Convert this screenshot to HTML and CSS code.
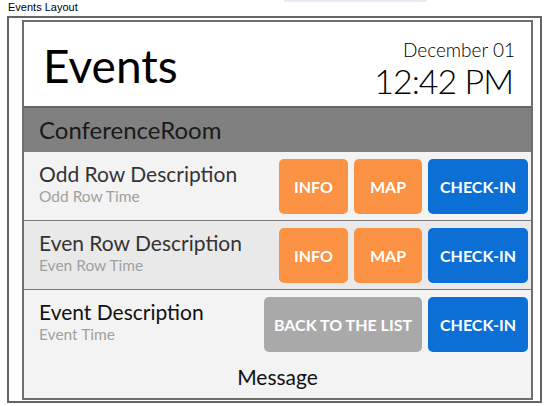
FILE: index.html
```html
<!DOCTYPE html>
<html>
<head>
<meta charset="utf-8">
<link rel="stylesheet" href="styles.css">
</head>
<body>
<div class="topline">
  <span class="caption">Events Layout</span>
  <span class="tabstrip"></span>
</div>
<div class="frame">
  <div class="panel">
    <div class="header">
      <div class="title">Events</div>
      <div class="clock">
        <div class="date">December 01</div>
        <div class="time">12:42 PM</div>
      </div>
    </div>
    <div class="room">ConferenceRoom</div>
    <div class="row odd">
      <div class="info">
        <div class="desc">Odd Row Description</div>
        <div class="when">Odd Row Time</div>
      </div>
      <div class="btns">
        <div class="btn orange w-info">INFO</div>
        <div class="btn orange w-map">MAP</div>
        <div class="btn blue w-check">CHECK-IN</div>
      </div>
    </div>
    <div class="row even">
      <div class="info">
        <div class="desc">Even Row Description</div>
        <div class="when">Even Row Time</div>
      </div>
      <div class="btns">
        <div class="btn orange w-info">INFO</div>
        <div class="btn orange w-map">MAP</div>
        <div class="btn blue w-check">CHECK-IN</div>
      </div>
    </div>
    <div class="row odd last">
      <div class="info">
        <div class="desc dark">Event Description</div>
        <div class="when">Event Time</div>
      </div>
      <div class="btns">
        <div class="btn grey w-back">BACK TO THE LIST</div>
        <div class="btn blue w-check">CHECK-IN</div>
      </div>
    </div>
    <div class="message">Message</div>
  </div>
</div>
</body>
</html>
```
FILE: styles.css
```css
html, body {
  margin: 0;
  padding: 0;
  background: #ffffff;
}
body {
  width: 544px;
  height: 406px;
  overflow: hidden;
  font-family: Lato, "Open Sans", sans-serif;
}
.topline {
  display: flex;
  align-items: flex-start;
  height: 16px;
}
.caption {
  font-family: "Liberation Sans", Arial, sans-serif;
  font-size: 11px;
  line-height: 13px;
  color: #000;
  margin-left: 8px;
  margin-top: 1px;
}
.tabstrip {
  width: 143px;
  height: 2px;
  background: #e6edf7;
  margin-left: 206px;
}
.frame {
  box-sizing: border-box;
  width: 535px;
  height: 387px;
  margin-left: 7px;
  border: 2px solid #646464;
  padding: 2px 7px 1px 13px;
}
.panel {
  box-sizing: border-box;
  width: 511px;
  height: 380px;
  border: 2px solid #6e6e6e;
  background: #f3f3f3;
  display: flex;
  flex-direction: column;
}
.header {
  height: 84px;
  background: #ffffff;
  display: flex;
  justify-content: space-between;
  align-items: flex-start;
  padding: 0 16px 0 19px;
}
.title {
  font-size: 46px;
  line-height: 46px;
  margin-top: 21px;
  color: #000;
}
.clock {
  text-align: right;
  color: #000;
  margin-top: 17px;
}
.date {
  font-size: 19px;
  font-weight: 300;
  line-height: 22px;
}
.time {
  font-size: 34px;
  font-weight: 300;
  letter-spacing: -1px;
  line-height: 34px;
  margin-top: 3px;
  margin-right: 2px;
}
.room {
  height: 44px;
  border-top: 2px solid #666;
  background: #808080;
  color: #1a1a1a;
  font-size: 24px;
  line-height: 44px;
  padding-left: 15px;
}
.row {
  height: 68px;
  display: flex;
  justify-content: space-between;
  align-items: flex-start;
  border-bottom: 1px solid #7a7a7a;
}
.row.last {
  border-bottom: none;
}
.odd { background: #f3f3f3; }
.even { background: #e9e9e9; }
.info {
  padding-left: 15px;
  padding-top: 9px;
}
.desc {
  font-size: 21px;
  line-height: 26px;
  color: #333;
}
.desc.dark { color: #111; }
.when {
  font-size: 15.5px;
  line-height: 18px;
  color: #a0a0a0;
}
.btns {
  display: flex;
  gap: 6px;
  padding: 7px 3px 0 0;
}
.btn {
  height: 55px;
  border-radius: 5px;
  color: #fff;
  font-weight: 700;
  font-size: 16px;
  display: flex;
  align-items: center;
  justify-content: center;
}
.orange { background: #fb9244; }
.blue { background: #0b6fd6; }
.grey { background: #a9a9a9; }
.w-info { width: 69px; }
.w-map { width: 68px; }
.w-check { width: 100px; }
.w-back { width: 158px; }
.message {
  flex: 1;
  text-align: center;
  font-size: 21px;
  line-height: 38px;
  color: #111;
}
```
